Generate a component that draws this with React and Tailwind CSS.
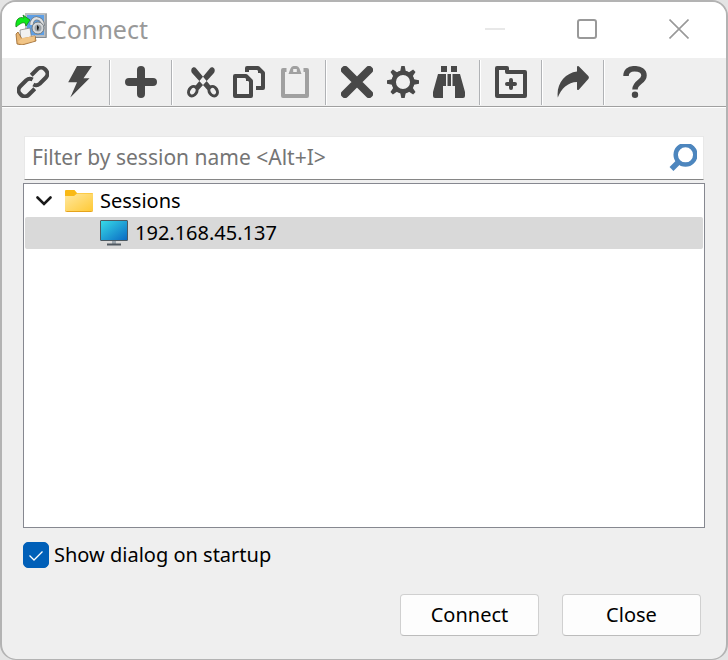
import React from "react";

const INK = "#484848";

function Icon({ children }) {
  return (
    <svg viewBox="0 0 32 32" className="h-8 w-8" fill="none" aria-hidden="true">
      {children}
    </svg>
  );
}

const LinkIcon = () => (
  <Icon>
    <g transform="rotate(-45 16 16)" stroke={INK} strokeWidth="4">
      <path d="M13 22H4.500a5.500 5.500 0 0 1-5.500-5.500v-1a5.500 5.500 0 0 1 5.500-5.500H13a5.500 5.500 0 0 1 5 4" transform="translate(-.5 0)" />
      <path d="M19 10h8.500a5.500 5.500 0 0 1 5.500 5.500v1a5.500 5.500 0 0 1-5.500 5.500H19a5.500 5.500 0 0 1-5-4" transform="translate(.5 0)" />
    </g>
  </Icon>
);

const BoltIcon = () => (
  <Icon>
    <path fill={INK} d="M14 0h15l-8.500 12.200h6L7.300 31.500 14 16.200H5.200z" />
  </Icon>
);

const PlusIcon = () => (
  <Icon>
    <path stroke={INK} strokeWidth="8" strokeLinecap="round" d="M16 4v24M4 16h24" />
  </Icon>
);

const CutIcon = () => (
  <Icon>
    <path fill={INK} d="M4.500 3C5.500 1 8 .8 9.200 2.500L25 21.500l-4.500 2.500L5.500 7.500C4.200 6 4 4.500 4.500 3zM27.500 3C26.500 1 24 .8 22.800 2.500L7 21.500 11.500 24 26.500 7.500C27.800 6 28 4.500 27.500 3z" />
    <ellipse cx="5.800" cy="25.200" rx="3.900" ry="5" stroke={INK} strokeWidth="3" transform="rotate(32 5.800 25.200)" />
    <ellipse cx="26.200" cy="25.200" rx="3.900" ry="5" stroke={INK} strokeWidth="3" transform="rotate(-32 26.200 25.200)" />
  </Icon>
);

const CopyIcon = () => (
  <Icon>
    <g stroke={INK} strokeWidth="4" strokeLinejoin="round">
      <path d="M2 10h11l5 5v15H2z" />
      <path d="M14 6V2h11l5 5v15h-7" />
    </g>
    <path fill={INK} d="M13 9v6h6zM25 1v6h6z" />
  </Icon>
);

const PasteIcon = () => (
  <Icon>
    <path stroke="#a0a0a0" strokeWidth="4" strokeLinejoin="round" d="M7.500 4H4v26h24V4h-3.500" />
    <path fill="#a0a0a0" fillRule="evenodd" d="M9.500 8l2-5.500Q12.500 0 14.500 0h3q2 0 3 2.500l2 5.500zM14.200 3v3h3.600V3z" />
  </Icon>
);

const DeleteIcon = () => (
  <Icon>
    <path stroke={INK} strokeWidth="8" strokeLinecap="round" d="M4 4l24 24M28 4L4 28" />
  </Icon>
);

const GearIcon = () => (
  <Icon>
    <circle cx="16" cy="16" r="9.300" stroke={INK} strokeWidth="4.500" />
    <g fill={INK}>
      {[0, 45, 90, 135, 180, 225, 270, 315].map((a) => (
        <path key={a} d="M14.300 0h3.400l1.300 6.500h-6z" transform={`rotate(${a} 16 16)`} />
      ))}
    </g>
  </Icon>
);

const FindIcon = () => (
  <Icon>
    <path fill={INK} d="M8 0h6v6H8zM18 0h6v6h-6zM14.500 8h3.500v12h-3.500zM5 8h8v12h-3v12H2a2 2 0 0 1-2-2v-4zM19.500 8H27l5 18v4a2 2 0 0 1-2 2h-8V20h-2.500z" />
  </Icon>
);

const NewFolderIcon = () => (
  <Icon>
    <path stroke={INK} strokeWidth="4" strokeLinejoin="round" d="M2 30V2h10v4h18v24z" />
    <path stroke={INK} strokeWidth="4" strokeLinecap="round" d="M16 14v8M12 18h8" />
  </Icon>
);

const ShareIcon = () => (
  <Icon>
    <path fill={INK} d="M20 1.200c0-1.300 1.200-1.600 2-.7l9.300 9.500q1.200 1.500 0 3L22 23.500c-1 1-2 .5-2-.7V16C11 16 4 23 .8 31.500-1 18 8 7 20 5.500z" />
  </Icon>
);

const HelpIcon = () => (
  <Icon>
    <path stroke={INK} strokeWidth="5.500" d="M7 10c0-4.500 3-7.300 8.500-7.300 6 0 9.500 2.500 9.500 6.800 0 6.500-9 6.500-9 14" />
    <circle cx="16" cy="28.800" r="3.200" fill={INK} />
  </Icon>
);

const GROUPS = [
  [["Connect", LinkIcon], ["Quick Connect", BoltIcon]],
  [["New Session", PlusIcon]],
  [["Cut", CutIcon], ["Copy", CopyIcon], ["Paste", PasteIcon]],
  [["Delete", DeleteIcon], ["Properties", GearIcon], ["Find", FindIcon]],
  [["New Folder", NewFolderIcon]],
  [["Create Shortcut", ShareIcon]],
  [["Help", HelpIcon]],
];

function AppLogo() {
  return (
    <svg viewBox="0 0 32 32" className="h-8 w-8" aria-hidden="true">
      <path d="M10 0h22v25H10z" fill="#b9bdc0" />
      <path d="M31 1v23.500H12" fill="none" stroke="#858b90" />
      <path d="M12 2h17v20H12z" fill="#5c9fe6" />
      <path d="M16.500 12c0-9 11-9 11.500 1" fill="none" stroke="#777d82" strokeWidth="4" />
      <path d="M16.500 12c0-9 11-9 11.500 1" fill="none" stroke="#dfe2e4" strokeWidth="2.500" />
      <circle cx="23" cy="15" r="6" fill="#d5d8da" stroke="#73797d" />
      <circle cx="23" cy="15" r="3.500" fill="#9da3a7" />
      <path d="M22 12l2 2-1 4-1-2z" fill="#17191a" />
      <path d="M1 14C0 7 4 3 9 5l-1-3 7 5-4 6-1-3c-3-1-5 1-9 4z" fill="#0eea1b" stroke="#16811a" strokeWidth=".8" />
      <path d="M5 17l10-2 2 13-11 1z" fill="#f1f1f1" stroke="#777" strokeWidth=".7" />
      <path d="M1 21l2-2 4 7 13-3 1 5-14 4-5-1z" fill="#e8b572" stroke="#98642b" strokeWidth=".8" />
      <path d="M3 29l4-4 13-2-1 5-12 3z" fill="#f1c587" />
    </svg>
  );
}

function FolderIcon() {
  return (
    <svg viewBox="0 0 28 22" className="h-[22px] w-7" aria-hidden="true">
      <defs>
        <linearGradient id="folder" x1="0" y1="0" x2="1" y2="1">
          <stop offset="0" stopColor="#ffe8a0" />
          <stop offset="1" stopColor="#ffc934" />
        </linearGradient>
      </defs>
      <path d="M0 1q0-1 1-1h8.500L12 3h15q1 0 1 1v6H0z" fill="#f9b915" />
      <path d="M0 6h9l3-2.500h16V20q0 1.500-1.500 1.500h-25Q0 21.500 0 20z" fill="url(#folder)" />
      <path d="M0 20.500q.5 1 1.500 1h25q1 0 1.500-1" fill="none" stroke="#e5a31c" />
    </svg>
  );
}

function MonitorIcon() {
  return (
    <svg viewBox="0 0 28 26" className="h-[26px] w-7" aria-hidden="true">
      <defs>
        <linearGradient id="screen" x1="0" y1="0" x2="1" y2="1">
          <stop offset="0" stopColor="#37dce8" />
          <stop offset="1" stopColor="#0a68c3" />
        </linearGradient>
      </defs>
      <path d="M12 21h4v3h-4z" fill="#9ba5ad" />
      <path d="M7 23.500h14v2H7z" fill="#505860" />
      <rect x=".5" y=".5" width="27" height="20" rx=".5" fill="url(#screen)" stroke="#4d5961" />
    </svg>
  );
}

export default function App() {
  return (
    <div className="min-h-screen bg-[#e4e4e4] font-['Noto_Sans','Open_Sans',sans-serif] text-xl text-black">
      <div className="flex min-h-screen flex-col overflow-hidden rounded-2xl border-2 border-b border-[#b3b3b3] bg-[#efefef]">
        <header className="flex h-14 items-center bg-white pr-px pb-0.5 pl-[13px]">
          <AppLogo />
          <h1 className="ml-1 flex-1 text-[25px] leading-8 text-[#999]">Connect</h1>
          <button type="button" aria-label="Minimize" disabled className="flex h-full w-[92px] items-center justify-center">
            <span className="h-0.5 w-5 bg-[#e8e8e8]" />
          </button>
          <button type="button" aria-label="Maximize" className="flex h-full w-[92px] items-center justify-center">
            <span className="h-5 w-5 rounded-[3px] border-2 border-[#999]" />
          </button>
          <button type="button" aria-label="Close window" className="flex h-full w-[92px] items-center justify-center">
            <svg viewBox="0 0 20 20" className="h-5 w-5" aria-hidden="true">
              <path d="M.5.500l19 19M19.500.5l-19 19" stroke="#999" strokeWidth="1.600" />
            </svg>
          </button>
        </header>

        <div role="toolbar" aria-label="Session tools" className="flex h-[49px] items-center border-b border-[#a0a0a0] pl-2">
          {GROUPS.map((group, i) => (
            <React.Fragment key={i}>
              {i > 0 && (
                <div className="flex h-[45px] w-4 justify-center">
                  <span className="w-px bg-[#b0b2b5]" />
                  <span className="w-px bg-white" />
                </div>
              )}
              {group.map(([label, Glyph]) => (
                <button key={label} type="button" aria-label={label} className="flex h-full w-[46px] items-center justify-center">
                  <Glyph />
                </button>
              ))}
            </React.Fragment>
          ))}
        </div>

        <main className="flex flex-1 flex-col border-t border-white px-[21px] pt-7 pb-[23px]">
          <label className="mx-px flex h-11 items-center border border-b-[#868686] border-[#e8e8e8] bg-white pr-1.5 pl-[7px]">
            <input
              type="text"
              aria-label="Filter by session name"
              placeholder="Filter by session name <Alt+I>"
              className="min-w-0 flex-1 bg-transparent text-[21px] outline-none placeholder:text-[#757575]"
            />
            <svg viewBox="0 0 28 28" className="h-7 w-7" fill="none" stroke="#4d86be" aria-hidden="true">
              <circle cx="16.500" cy="10.800" r="9.800" strokeWidth="4.500" />
              <path d="M9.500 18l-7 7" strokeWidth="5.500" />
            </svg>
          </label>

          <ul role="tree" aria-label="Sessions" className="mt-[3px] flex-1 border border-[#868890] bg-white px-px pt-px">
            <li role="treeitem" aria-expanded="true">
              <div className="flex h-8 items-center pl-[11px]">
                <svg viewBox="0 0 16 10" className="mr-[13px] h-2.5 w-4" fill="none" aria-hidden="true">
                  <path d="M1.500 1.500L8 8l6.500-6.500" stroke="#1a1a1a" strokeWidth="2.600" strokeLinecap="round" />
                </svg>
                <FolderIcon />
                <span className="ml-[7px]">Sessions</span>
              </div>
              <ul role="group">
                <li role="treeitem" aria-selected="true" className="flex h-8 items-center rounded-xs bg-[#d9d9d9] pl-[75px]">
                  <MonitorIcon />
                  <span className="ml-[7px]">192.168.45.137</span>
                </li>
              </ul>
            </li>
          </ul>

          <label className="mt-3.5 flex items-center gap-[5px] self-start">
            <span className="grid h-[26px] w-[26px]">
              <input type="checkbox" defaultChecked className="peer col-start-1 row-start-1 h-[26px] w-[26px] appearance-none rounded-[5px] border border-[#868686] bg-white checked:border-[#005fb8] checked:bg-[#005fb8]" />
              <svg viewBox="0 0 26 26" className="pointer-events-none invisible col-start-1 row-start-1 peer-checked:visible" fill="none" aria-hidden="true">
                <path d="M6.500 13.500l4.500 4.500 8.500-8.500" stroke="#fff" strokeWidth="1.300" />
              </svg>
            </span>
            <span className="leading-[26px]">Show dialog on startup</span>
          </label>

          <div className="mt-[26px] flex justify-end gap-[23px] pr-1">
            <button type="button" className="h-[42px] w-[139px] rounded border border-[#d0d0d0] border-b-[#bcbcbc] bg-[#fdfdfd]">Connect</button>
            <button type="button" className="h-[42px] w-[139px] rounded border border-[#d0d0d0] border-b-[#bcbcbc] bg-[#fdfdfd]">Close</button>
          </div>
        </main>
      </div>
    </div>
  );
}
